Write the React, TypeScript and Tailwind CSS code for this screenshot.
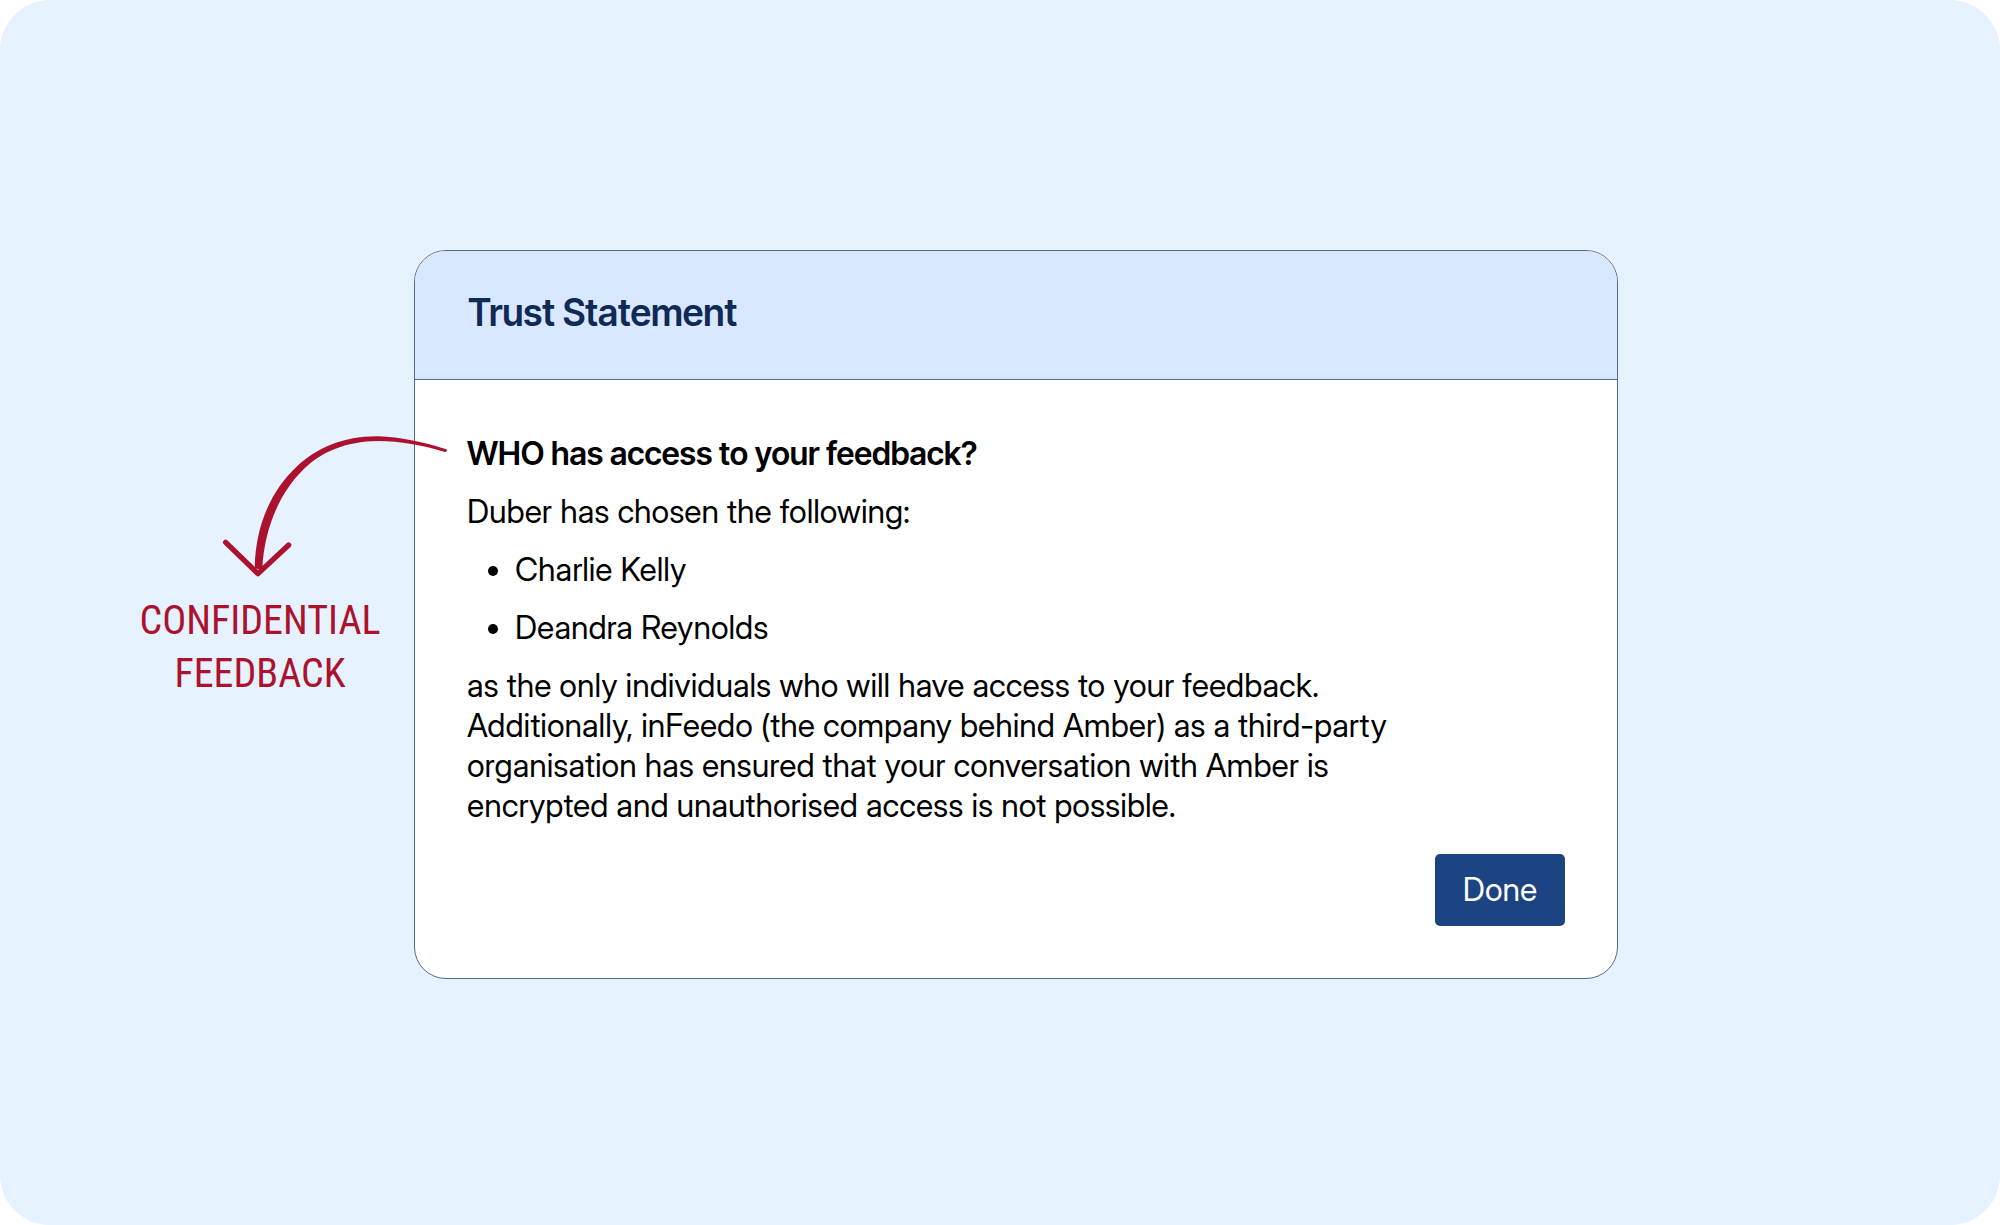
import React from 'react';

const people = ['Charlie Kelly', 'Deandra Reynolds'];

const Callout = () => (
  <aside className="relative z-10 mt-[185px] w-[244px] shrink-0 self-start text-[#ac122d]">
    <svg
      className="block h-[143px] w-[310px] max-w-none"
      viewBox="54 42 930 429"
      fill="none"
      aria-hidden="true"
    >
      <path
        d="M979 85C905 62 842 48 775 46C665 45 590 83 532 135C453 208 406 315 404 442L427 446C431 330 476 219 548 148C602 93 676 61 775 60C842 60 905 72 975 93Q984 92 979 85Z"
        fill="currentColor"
      />
      <path
        d="M317 364L414 458L506 372"
        stroke="currentColor"
        strokeWidth="16"
        strokeLinecap="round"
        strokeLinejoin="round"
      />
    </svg>
    <p className="mt-4 text-center font-['Roboto_Condensed','Roboto',sans-serif] text-[40px] leading-[53px]">
      CONFIDENTIAL
      <br />
      FEEDBACK
    </p>
  </aside>
);

const TrustCard = () => (
  <section className="min-w-0 flex-1 overflow-hidden rounded-[32px] border border-[#536a91] bg-white">
    <header className="border-b border-[#536a91] bg-[#d9e7ff] px-[53px] pt-[38px] pb-[42px]">
      <h1 className="font-['Inter_Tight','Inter',sans-serif] text-[37px] leading-[48px] font-semibold text-[#0f2a56]">
        Trust Statement
      </h1>
    </header>

    <div className="flex flex-col px-[52px] pt-[54px] pb-[52px] text-[32px] leading-[40px] text-black">
      <div className="flex max-w-[940px] flex-col gap-[18px]">
        <h2 className="font-['Inter_Tight','Inter',sans-serif] font-semibold">
          WHO has access to your feedback?
        </h2>
        <p>Duber has chosen the following:</p>
        <ul className="flex list-disc flex-col gap-[18px] pl-12">
          {people.map((name) => (
            <li key={name}>{name}</li>
          ))}
        </ul>
        <p>
          as the only individuals who will have access to your feedback. Additionally, inFeedo (the
          company behind Amber) as a third-party organisation has ensured that your conversation with
          Amber is encrypted and unauthorised access is not possible.
        </p>
      </div>

      <button
        type="button"
        className="mt-7 h-[72px] w-[130px] self-end rounded-[5px] bg-[#1d4482] text-white"
      >
        Done
      </button>
    </div>
  </section>
);

const App = () => {
  return (
    <div className="min-h-screen bg-white font-['Inter_Display','Inter',sans-serif]">
      <main className="flex min-h-screen items-center rounded-[50px] bg-[#e6f2ff] pt-[3px] pr-[19.1%] pl-[6.9%]">
        <div className="flex w-full gap-8">
          <Callout />
          <TrustCard />
        </div>
      </main>
    </div>
  );
};

export default App;
